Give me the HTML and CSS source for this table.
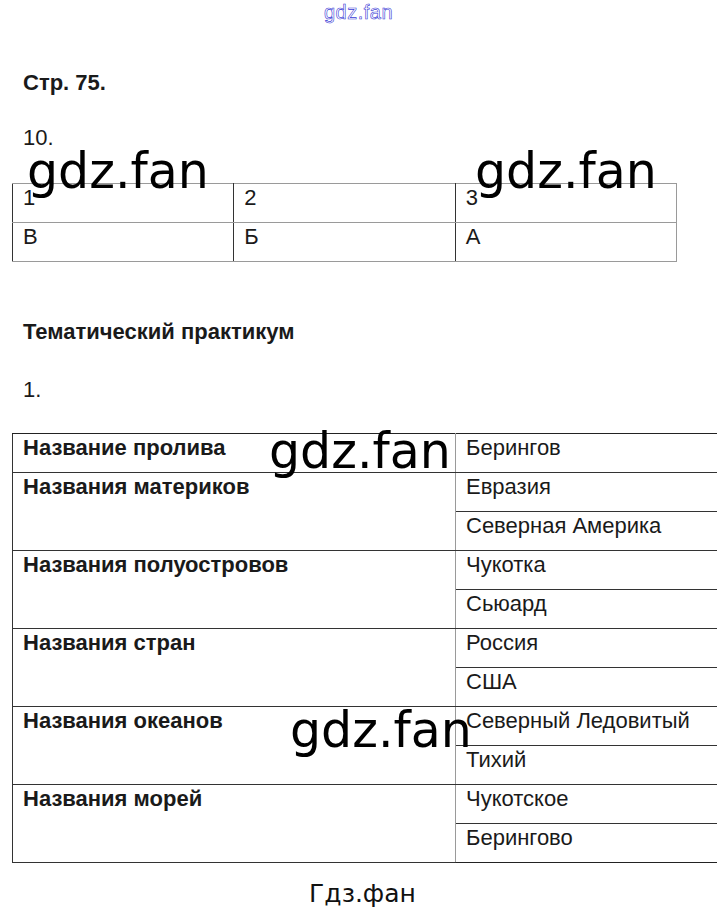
FILE: index.html
```html
<!DOCTYPE html>
<html lang="ru">
<head>
<meta charset="utf-8">
<title>gdz.fan</title>
<link rel="stylesheet" href="styles.css">
</head>
<body>
<div class="page">
  <div class="site-mark">gdz.fan</div>
  <p class="heading">Стр. 75.</p>
  <p class="num">10.</p>
  <table class="answers">
    <tr><td>1</td><td>2</td><td>3</td></tr>
    <tr><td>В</td><td>Б</td><td>А</td></tr>
  </table>
  <p class="heading section">Тематический практикум</p>
  <p class="num num-task">1.</p>
  <table class="names">
    <tr class="group"><th>Название пролива</th><td>Берингов</td></tr>
    <tr class="group"><th rowspan="2">Названия материков</th><td>Евразия</td></tr>
    <tr><td>Северная Америка</td></tr>
    <tr class="group"><th rowspan="2">Названия полуостровов</th><td>Чукотка</td></tr>
    <tr><td>Сьюард</td></tr>
    <tr class="group"><th rowspan="2">Названия стран</th><td>Россия</td></tr>
    <tr><td>США</td></tr>
    <tr class="group"><th rowspan="2">Названия океанов</th><td>Северный Ледовитый</td></tr>
    <tr><td>Тихий</td></tr>
    <tr class="group"><th rowspan="2">Названия морей</th><td>Чукотское</td></tr>
    <tr><td>Берингово</td></tr>
  </table>
  <div class="footer">Гдз.фан</div>

  <span class="wm wm1">gdz.fan</span>
  <span class="wm wm2">gdz.fan</span>
  <span class="wm wm3">gdz.fan</span>
  <span class="wm wm4">gdz.fan</span>
</div>
</body>
</html>
```
FILE: styles.css
```css
html, body {
  margin: 0;
  padding: 0;
  background: #fff;
  overflow-x: hidden;
}
.page {
  position: relative;
  width: 717px;
  height: 912px;
  overflow: hidden;
  font-family: "Liberation Sans", Arial, sans-serif;
  color: #1a1a1a;
}
.site-mark {
  text-align: center;
  font-family: "Liberation Sans", Arial, sans-serif;
  font-size: 20px;
  line-height: 24px;
  color: #fff;
  -webkit-text-stroke: 0.6px #3a3ad6;
  letter-spacing: 0.5px;
}
p {
  margin: 0;
}
.heading {
  margin-top: 47px;
  padding-left: 23px;
  font-weight: bold;
  font-size: 22px;
  line-height: 24px;
}
.num {
  margin-top: 31px;
  padding-left: 23px;
  font-size: 22px;
  line-height: 24px;
}
.section {
  margin-top: 58px;
}
.num-task {
  margin-top: 34px;
}
table {
  border-collapse: collapse;
  font-size: 22px;
}
.answers {
  margin-top: 33px;
  margin-left: 12px;
  width: 665px;
  table-layout: fixed;
}
.answers td {
  border: 1px solid #9a9a9a;
  height: 38px;
  padding: 0 10px;
  vertical-align: top;
  line-height: 27px;
}
.answers td:first-child,
.answers td:nth-child(2) {
  border-right-color: #333;
}
.answers td:first-child {
  border-left-color: #333;
}
.names {
  margin-top: 31px;
  margin-left: 12px;
  width: 720px;
  table-layout: fixed;
}
.names th {
  width: 422px;
  text-align: left;
  font-weight: bold;
  border: 1px solid #333;
  border-right-color: #9a9a9a;
  border-top-color: #8a8a8a;
  padding: 0 10px;
  vertical-align: top;
  line-height: 28px;
}
.names td {
  border-top: 1px solid #333;
  border-bottom: 1px solid #333;
  border-left: 1px solid #9a9a9a;
  padding: 0 10px;
  height: 38px;
  vertical-align: top;
  line-height: 28px;
}
.names tr.group td {
  border-top-color: #8a8a8a;
}
.names tr:first-child th,
.names tr:first-child td {
  border-top-color: #222;
}
.names tr:last-child td {
  border-bottom-color: #222;
}
.footer {
  margin-top: 15px;
  text-align: center;
  font-family: "DejaVu Sans", sans-serif;
  font-size: 25px;
  line-height: 32px;
  color: #111;
  padding-left: 8px;
}
.wm {
  position: absolute;
  font-family: "DejaVu Sans", sans-serif;
  font-size: 49px;
  line-height: 49px;
  color: #000;
  white-space: nowrap;
}
.wm1 { left: 27px; top: 147px; }
.wm2 { left: 475px; top: 147px; }
.wm3 { left: 269px; top: 427px; }
.wm4 { left: 290px; top: 706px; }
```
